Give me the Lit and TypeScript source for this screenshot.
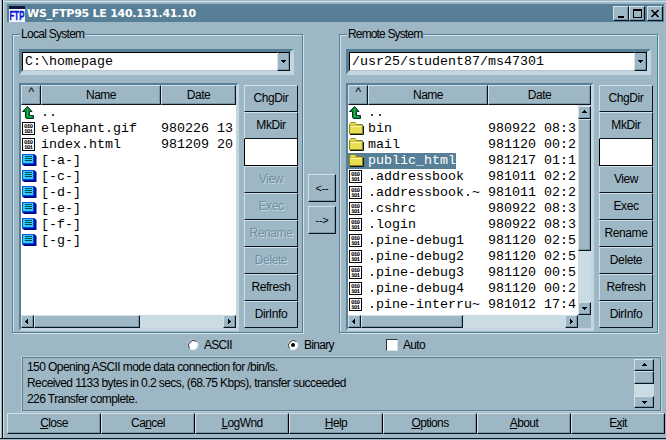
import { LitElement, html, css, svg, nothing } from "lit";
import { customElement, property } from "lit/decorators.js";

type Kind = "up" | "file" | "drive" | "folder";
interface Entry {
  kind: Kind;
  name: string;
  date?: string;
  selected?: boolean;
}

const LOCAL: Entry[] = [
  { kind: "up", name: ".." },
  { kind: "file", name: "elephant.gif", date: "980226 13" },
  { kind: "file", name: "index.html", date: "981209 20" },
  ...["a", "c", "d", "e", "f", "g"].map((d): Entry => ({ kind: "drive", name: `[-${d}-]` })),
];

const REMOTE: Entry[] = [
  { kind: "up", name: ".." },
  { kind: "folder", name: "bin", date: "980922 08:3" },
  { kind: "folder", name: "mail", date: "981120 00:2" },
  { kind: "folder", name: "public_html", date: "981217 01:1", selected: true },
  { kind: "file", name: ".addressbook", date: "981011 02:2" },
  { kind: "file", name: ".addressbook.~", date: "981011 02:2" },
  { kind: "file", name: ".cshrc", date: "980922 08:3" },
  { kind: "file", name: ".login", date: "980922 08:3" },
  { kind: "file", name: ".pine-debug1", date: "981120 02:5" },
  { kind: "file", name: ".pine-debug2", date: "981120 02:5" },
  { kind: "file", name: ".pine-debug3", date: "981120 00:5" },
  { kind: "file", name: ".pine-debug4", date: "981120 00:2" },
  { kind: "file", name: ".pine-interru~", date: "981012 17:4" },
];

const ACTIONS = ["ChgDir", "MkDir", "", "View", "Exec", "Rename", "Delete", "Refresh", "DirInfo"];

const ICONS = {
  up: svg`<path d="M6.5 1.5L11 6.5H8.5V10.5H12.5V13.5H5.5L4.5 12.5V6.5H1.5Z" fill="#0a8a2a" stroke="#033" stroke-width="1"/><path d="M6.5 3.5V11.5H11" fill="none" stroke="#2b4" stroke-width="1"/>`,
  file: svg`<rect x="1.5" y="1.5" width="12" height="12" fill="#fff" stroke="#000"/>
    <text x="3" y="7" textLength="9">010</text><text x="3" y="12.2" textLength="9">101</text>`,
  drive: svg`<path d="M1 1H13L15.500 3V13H3L1 11Z" fill="#000c98"/><path d="M1 1H13V11H1Z" fill="#0850e0"/>
    <rect x="2" y="2" width="10" height="8" fill="#28d0f8"/>
    <path d="M4 3.500H11M4 5.500H11M4 7.500H11" stroke="#046" stroke-width="1"/>`,
  folder: svg`<path d="M2 13.5H15.5V5" fill="none" stroke="#111"/>
    <path d="M1.500 12.500V3.500L3 1.500H7L8.500 3.500H14.500V12.500Z" fill="#e4de50" stroke="#8a8420"/>
    <path d="M2.500 5.500H13.500" stroke="#fffcb0"/><path d="M2 4.500H14" stroke="#c4bc38"/>`,
};

const base = css`
  :host {
    --face: #9db7c5;
    --dark: #577f97;
    --light: #d3e1e8;
    --track: #cbdbe3;
  }
  * {
    box-sizing: border-box;
  }
  .raised {
    background: var(--face);
    border: 1px solid;
    border-color: var(--light) #0a141c #0a141c var(--light);
    box-shadow: inset -1px -1px 0 #7897a8;
  }
  .center {
    display: flex;
    align-items: center;
    justify-content: center;
  }
`;

@customElement("scroll-arrow")
class ScrollArrow extends LitElement {
  @property() dir = "up";
  static styles = [
    base,
    css`
      :host {
        display: flex;
        flex: none;
        width: 13px;
        height: 13px;
      }
      .raised {
        flex: 1;
      }
      svg {
        display: block;
      }
    `,
  ];
  render() {
    const d = {
      up: "M3 1h1v1h1v1h1v1H1V3h1V2h1z",
      down: "M1 2h5v1H5v1H4v1H3V4H2V3H1z",
      left: "M4 1v5H3V5H2V4H1V3h1V2h1V1z",
      right: "M2 1h1v1h1v1h1v1H4v1H3v1H2z",
    }[this.dir];
    return html`<div class="raised center">
      <svg width="7" height="7" shape-rendering="crispEdges"><path d=${d} /></svg>
    </div>`;
  }
}

@customElement("system-pane")
class SystemPane extends LitElement {
  @property() label = "";
  @property() path = "";
  @property({ attribute: false }) entries: Entry[] = [];
  @property({ type: Boolean, reflect: true }) remote = false;

  static styles = [
    base,
    css`
      :host {
        display: block;
        width: 291px;
        height: 299px;
        border: 1px solid var(--dark);
        box-shadow: 1px 1px 0 var(--light), inset 1px 1px 0 var(--light);
        padding: 0 0 0 6px;
        box-sizing: border-box;
      }
      :host([remote]) {
        width: 319px;
      }
      .legend {
        width: max-content;
        height: 14px;
        line-height: 14px;
        margin: -8px 0 8px 1px;
        padding: 0 1px 0 1px;
        background: var(--face);
        letter-spacing: -0.72px;
      }
      :host([remote]) .legend {
        letter-spacing: -0.85px;
      }
      .combo {
        width: 275px;
        height: 26px;
        display: flex;
        border-style: solid;
        border-width: 3px 4px 4px 3px;
        border-color: var(--dark) #c3d5de #c3d5de var(--dark);
      }
      :host([remote]) .combo {
        width: 305px;
      }
      .field {
        flex: 1;
        background: #fff;
        border: 1px solid #000;
        border-right: 0;
        border-bottom-color: #b5c8d2;
        padding-left: 2px;
      }
      .drop {
        width: 13px;
        border-top-color: #000;
      }
      .mono {
        font: 13.33px/16px "Liberation Mono", monospace;
      }
      .field.mono {
        line-height: 18px;
      }
      .body {
        display: flex;
        margin-top: 8px;
        gap: 5px;
      }
      .list {
        width: 220px;
        height: 248px;
        border-style: solid;
        border-width: 2px 3px 3px 2px;
        border-color: var(--dark) #c3d5de #c3d5de var(--dark);
        display: grid;
        grid-template: 20px 1fr 13px / 1fr;
        background: #fff;
      }
      :host([remote]) .list {
        width: 248px;
      }
      .head {
        display: grid;
        grid-template-columns: 20px 120px 1fr;
        line-height: 18px;
        letter-spacing: -0.5px;
      }
      .head .sort {
        align-items: flex-start;
        line-height: 13px;
      }
      .mid {
        display: flex;
        min-height: 0;
      }
      .rows {
        flex: 1;
        overflow: hidden;
      }
      .row {
        height: 16px;
        display: flex;
      }
      .row svg {
        flex: none;
        width: 16px;
        height: 16px;
        margin-right: 4px;
      }
      .row text {
        font: bold 6px "Liberation Mono", monospace;
      }
      .name {
        width: 120px;
      }
      .sel {
        width: 108px;
        background: var(--dark);
        color: #fff;
      }
      .sel .name {
        width: 88px;
        flex: none;
        margin-right: 32px;
      }
      .date {
        white-space: pre;
      }
      .sel .date {
        color: #000;
      }
      .vbar {
        display: flex;
        flex-direction: column;
        width: 13px;
        background: var(--track);
        padding-top: 1px;
      }
      .vbar .thumb {
        height: 132px;
      }
      .vbar .gap,
      .hbar .gap {
        flex: 1;
      }
      .hbar {
        display: flex;
        background: var(--track);
      }
      .hbar .thumb {
        width: 106px;
      }
      :host([remote]) .hbar .thumb {
        width: 102px;
      }
      .corner {
        width: 13px;
        background: var(--face);
      }
      .actions {
        display: grid;
        grid-template-rows: repeat(9, 27px);
        width: 54px;
        margin-top: 2px;
        letter-spacing: -0.4px;
      }
      .actions .raised {
        box-shadow: none;
        padding-bottom: 1px;
      }
      .actions .blank {
        background: #fff;
        border-color: #000;
        border-top: 0;
      }
      .actions .off {
        color: #6f90a3;
        text-shadow: 1px 1px 0 #c8d8e0;
      }
    `,
  ];

  render() {
    return html`
      <div class="legend">${this.label}</div>
      <div class="combo">
        <div class="field mono">${this.path}</div>
        <div class="drop raised center">
          <svg width="7" height="7" shape-rendering="crispEdges"><path d="M1 2h5v1H5v1H4v1H3V4H2V3H1z" /></svg>
        </div>
      </div>
      <div class="body">
        <div class="list">
          <div class="head">
            <div class="raised center sort">^</div>
            <div class="raised center">Name</div>
            <div class="raised center">Date</div>
          </div>
          <div class="mid">
            <div class="rows mono">
              ${this.entries.map(
                (e) => html`<div class="row ${e.selected ? "sel" : ""}">
                  <svg viewBox="0 0 16 16">${ICONS[e.kind]}</svg>
                  <span class="name">${e.name}</span>
                  <span class="date">${e.date ?? ""}</span>
                </div>`
              )}
            </div>
            ${this.remote
              ? html`<div class="vbar">
                  <scroll-arrow dir="up"></scroll-arrow>
                  <div class="thumb raised"></div>
                  <div class="gap"></div>
                  <scroll-arrow dir="down"></scroll-arrow>
                </div>`
              : nothing}
          </div>
          <div class="hbar">
            <scroll-arrow dir="left"></scroll-arrow>
            <div class="thumb raised"></div>
            <div class="gap"></div>
            <scroll-arrow dir="right"></scroll-arrow>
            ${this.remote ? html`<div class="corner"></div>` : nothing}
          </div>
        </div>
        <div class="actions">
          ${ACTIONS.map((a, i) => {
            const off = !this.remote && i > 2 && i < 7;
            return html`<div class="raised center ${a ? "" : "blank"} ${off ? "off" : ""}">${a}</div>`;
          })}
        </div>
      </div>
    `;
  }
}

@customElement("app-root")
class AppRoot extends LitElement {
  static styles = [
    base,
    css`
      :host {
        display: block;
        width: 666px;
        height: 440px;
        overflow: hidden;
        background: var(--face);
        color: #000;
        font: 12px "Liberation Sans", sans-serif;
      }
      .window {
        height: 440px;
        display: grid;
        grid-template-columns: 3px 1fr;
        grid-template-rows: 438px 2px;
      }
      .edge {
        border-left: 1px solid var(--light);
        border-right: 1px solid #000;
      }
      .foot {
        grid-column: 1 / 3;
        background: #0a141c;
        border-bottom: 1px solid var(--face);
      }
      .inner {
        border-left: 1px solid var(--light);
        padding: 1px 0 0 3px;
        display: flex;
        flex-direction: column;
      }
      .topline {
        height: 1px;
        margin-left: -3px;
        background: var(--light);
        margin-bottom: 2px;
      }
      .title {
        height: 18px;
        margin-right: 2px;
        background: var(--dark);
        display: flex;
        align-items: center;
        color: #fff;
        font: bold 11px "DejaVu Sans", sans-serif;
      }
      .logo {
        margin: 2px 2px 0 2px;
        width: 16px;
        height: 16px;
      }
      .logo text {
        font: bold 13px "Liberation Sans", sans-serif;
      }
      .caption {
        flex: 1;
        letter-spacing: -0.25px;
      }
      .ctl {
        width: 16px;
        height: 15px;
      }
      .ctl.close {
        margin-left: 2px;
        margin-right: 1px;
      }
      .panes {
        display: flex;
        margin: 12px 0 0 5px;
        align-items: flex-start;
      }
      .transfer {
        width: 28px;
        margin: 140px 3px 0 5px;
        display: grid;
        grid-template-rows: 28px 28px;
        gap: 4px;
        font-size: 11px;
        letter-spacing: -0.3px;
      }
      .modes {
        display: flex;
        height: 24px;
        padding-left: 180px;
        align-items: center;
      }
      .mode {
        display: flex;
        align-items: center;
        gap: 5px;
        letter-spacing: -0.7px;
      }
      .mode.ascii {
        width: 100px;
      }
      .mode.binary {
        width: 99px;
      }
      .check {
        width: 12px;
        height: 12px;
        background: #fff;
        border: 1px solid;
        border-color: #24323c var(--light) var(--light) #24323c;
      }
      .log {
        margin: 0 5px 0 15px;
        height: 54px;
        border: 1px solid var(--dark);
        box-shadow: 0 0 0 1px #bdd0da;
        display: flex;
        padding: 1px 6px 2px 4px;
      }
      .lines {
        flex: 1;
        line-height: 16px;
        letter-spacing: -0.57px;
        white-space: nowrap;
      }
      .vbar {
        width: 20px;
        display: flex;
        flex-direction: column;
        background: var(--track);
      }
      .vbar scroll-arrow {
        width: 20px;
        height: 12px;
      }
      .vbar .thumb {
        height: 13px;
      }
      .vbar .gap {
        flex: 1;
      }
      .menu {
        display: grid;
        grid-template-columns: repeat(7, 1fr);
        height: 21px;
        margin: 2px 1px 0 0;
        letter-spacing: -0.6px;
      }
      .menu div {
        text-align: center;
        line-height: 19px;
        border-right-color: #000;
      }
    `,
  ];

  render() {
    return html`
      <div class="window">
        <div class="edge"></div>
        <div class="inner">
          <div class="topline"></div>
          <div class="title">
            <svg class="logo" viewBox="0 0 16 16">
              <rect width="16" height="16" fill="#f4f8ff" />
              <rect width="16" height="3" fill="#101838" />
              <g transform="translate(0.6 13.8) scale(0.6 1)">
                <text fill="#0818d0" stroke="#0818d0" stroke-width="0.4">FTP</text>
              </g>
            </svg>
            <div class="caption">WS_FTP95 LE 140.131.41.10</div>
            <div class="ctl raised center">
              <svg width="12" height="11" shape-rendering="crispEdges"><path d="M3 8h6v2H3z" /></svg>
            </div>
            <div class="ctl raised center">
              <svg width="12" height="11" shape-rendering="crispEdges">
                <path d="M2 1h9v9H2zM3 3v6h7V3z" fill-rule="evenodd" />
              </svg>
            </div>
            <div class="ctl close raised center">
              <svg width="12" height="11"><path d="M2.5 2L9.5 9M9.5 2L2.5 9" stroke="#000" stroke-width="1.7" /></svg>
            </div>
          </div>
          <div class="panes">
            <system-pane label="Local System" path="C:\\homepage" .entries=${LOCAL}></system-pane>
            <div class="transfer">
              <div class="raised center">&lt;--</div>
              <div class="raised center">--&gt;</div>
            </div>
            <system-pane remote label="Remote System" path="/usr25/student87/ms47301" .entries=${REMOTE}></system-pane>
          </div>
          <div class="modes">
            <div class="mode ascii">
              <svg width="12" height="12">
                <circle cx="6" cy="6" r="5" fill="#fff" stroke="#d3e1e8" />
                <path d="M2.5 9.5A5 5 0 0 1 9.5 2.5" fill="none" stroke="#24323c" />
              </svg>
              ASCII
            </div>
            <div class="mode binary">
              <svg width="12" height="12">
                <circle cx="6" cy="6" r="5" fill="#fff" stroke="#d3e1e8" />
                <path d="M2.5 9.5A5 5 0 0 1 9.5 2.5" fill="none" stroke="#24323c" />
                <circle cx="6" cy="6" r="2" />
              </svg>
              Binary
            </div>
            <div class="mode">
              <div class="check"></div>
              Auto
            </div>
          </div>
          <div class="log">
            <div class="lines">
              <div>150 Opening ASCII mode data connection for /bin/ls.</div>
              <div>Received 1133 bytes in 0.2 secs, (68.75 Kbps), transfer succeeded</div>
              <div>226 Transfer complete.</div>
            </div>
            <div class="vbar">
              <scroll-arrow dir="up"></scroll-arrow>
              <div class="thumb raised"></div>
              <div class="gap"></div>
              <scroll-arrow dir="down"></scroll-arrow>
            </div>
          </div>
          <div class="menu">
            <div class="raised"><u>C</u>lose</div>
            <div class="raised">Ca<u>n</u>cel</div>
            <div class="raised"><u>L</u>ogWnd</div>
            <div class="raised"><u>H</u>elp</div>
            <div class="raised"><u>O</u>ptions</div>
            <div class="raised"><u>A</u>bout</div>
            <div class="raised">E<u>x</u>it</div>
          </div>
        </div>
        <div class="foot"></div>
      </div>
    `;
  }
}
